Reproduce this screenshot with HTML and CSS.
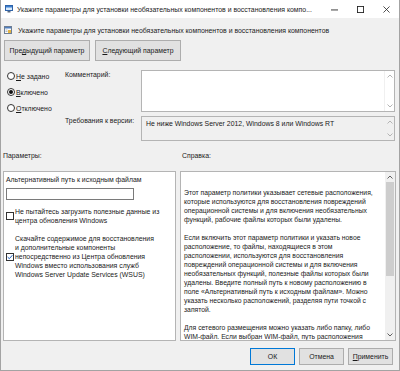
FILE: index.html
```html
<!DOCTYPE html>
<html lang="ru">
<head>
    <meta charset="UTF-8">
    <title>Укажите параметры для установки необязательных компонентов и восстановления компонентов</title>
    <link rel="stylesheet" href="styles.css">
</head>
<body>
    <div class="window">
        <div class="titlebar">
            <svg class="app-icon" viewBox="0 0 8 8">
                <rect x="0.5" y="0.5" width="7" height="5" fill="#d6e8fa" stroke="#2f63a8"/>
                <rect x="1" y="1" width="6" height="1.5" fill="#3b7fd0"/>
                <rect x="2.5" y="6" width="3" height="1.5" fill="#5a6a80"/>
            </svg>
            <div class="title">Укажите параметры для установки необязательных компонентов и восстановления компо...</div>
            <div class="controls">
                <span class="ctl"><svg viewBox="0 0 8 8"><path d="M0 4.5 H8" stroke="#222" stroke-width="1"/></svg></span>
                <span class="ctl"><svg viewBox="0 0 8 8"><rect x="0.5" y="0.5" width="7" height="7" fill="none" stroke="#222"/></svg></span>
                <span class="ctl"><svg viewBox="0 0 8 8"><path d="M0.5 0.5 L7.5 7.5 M7.5 0.5 L0.5 7.5" stroke="#222" stroke-width="0.9"/></svg></span>
            </div>
        </div>

        <div class="policy-head">
            <svg class="policy-icon" viewBox="0 0 8 8">
                <rect x="0.5" y="0.5" width="7" height="7" fill="#fdfdfd" stroke="#6d7d93"/>
                <rect x="1" y="1" width="6" height="1.5" fill="#4f7fc0"/>
                <rect x="4" y="4" width="3" height="3" fill="#e3b341"/>
                <path d="M1.5 4 H3.5 M1.5 5.5 H3.5" stroke="#8a96a8" stroke-width="0.7"/>
            </svg>
            <span>Укажите параметры для установки необязательных компонентов и восстановления компонентов</span>
        </div>

        <div class="nav">
            <button class="btn btn-nav">Пре<u>д</u>ыдущий параметр</button>
            <button class="btn btn-nav"><u>С</u>ледующий параметр</button>
        </div>

        <div class="top">
            <div class="states">
                <label class="radio"><span class="radio-dot"></span><span><u>Н</u>е задано</span></label>
                <label class="radio"><span class="radio-dot checked"></span><span><u>В</u>ключено</span></label>
                <label class="radio"><span class="radio-dot"></span><span><u>О</u>тключено</span></label>
            </div>
            <div class="fields">
                <div class="field-label">Комментарий:</div>
                <div class="box box-comment">
                    <div class="box-text"></div>
                    <div class="vscroll vscroll-off">
                        <svg class="arrow" viewBox="0 0 6 4"><path d="M0.5 3.5 L3 1 L5.5 3.5" fill="none" stroke="#b4b4b4"/></svg>
                        <svg class="arrow" viewBox="0 0 6 4"><path d="M0.5 0.5 L3 3 L5.5 0.5" fill="none" stroke="#b4b4b4"/></svg>
                    </div>
                </div>
                <div class="field-label">Требования к версии:</div>
                <div class="box box-readonly">
                    <div class="box-text">Не ниже Windows Server 2012, Windows 8 или Windows RT</div>
                    <div class="vscroll vscroll-off">
                        <svg class="arrow" viewBox="0 0 6 4"><path d="M0.5 3.5 L3 1 L5.5 3.5" fill="none" stroke="#b4b4b4"/></svg>
                        <svg class="arrow" viewBox="0 0 6 4"><path d="M0.5 0.5 L3 3 L5.5 0.5" fill="none" stroke="#b4b4b4"/></svg>
                    </div>
                </div>
            </div>
        </div>

        <div class="split section-labels">
            <div>Параметры:</div>
            <div class="help-label">Справка:</div>
        </div>

        <div class="split panels">
            <div class="panel options">
                <div>Альтернативный путь к исходным файлам</div>
                <div class="input"></div>
                <label class="check check-first">
                    <span class="check-box"></span>
                    <span>Не пытайтесь загрузить полезные данные из<br>центра обновления Windows</span>
                </label>
                <label class="check check-second">
                    <span class="check-box">
                        <svg viewBox="0 0 6 6"><path d="M0.6 3 L2.3 4.7 L5.4 1.2" fill="none" stroke="#1f5fbf" stroke-width="1"/></svg>
                    </span>
                    <span>Скачайте содержимое для восстановления<br>и дополнительные компоненты<br>непосредственно из Центра обновления<br>Windows вместо использования служб<br>Windows Server Update Services (WSUS)</span>
                </label>
            </div>

            <div class="panel help">
                <div class="help-text">
                    <p>Этот параметр политики указывает сетевые расположения,<br>которые используются для восстановления повреждений<br>операционной системы и для включения необязательных<br>функций, рабочие файлы которых были удалены.</p>
                    <p>Если включить этот параметр политики и указать новое<br>расположение, то файлы, находящиеся в этом<br>расположении, используются для восстановления<br>повреждений операционной системы и для включения<br>необязательных функций, полезные файлы которых были<br>удалены. Введите полный путь к новому расположению в<br>поле «Альтернативный путь к исходным файлам». Можно<br>указать несколько расположений, разделяя пути точкой с<br>запятой.</p>
                    <p>Для сетевого размещения можно указать либо папку, либо<br>WIM-файл. Если выбран WIM-файл, путь расположения</p>
                </div>
                <div class="vscroll">
                    <svg class="arrow" viewBox="0 0 6 4"><path d="M0.5 3.5 L3 1 L5.5 3.5" fill="none" stroke="#606060"/></svg>
                    <div class="thumb"></div>
                    <div class="track"></div>
                    <svg class="arrow" viewBox="0 0 6 4"><path d="M0.5 0.5 L3 3 L5.5 0.5" fill="none" stroke="#606060"/></svg>
                </div>
            </div>
        </div>

        <div class="footer">
            <button class="btn btn-default">ОК</button>
            <button class="btn">Отмена</button>
            <button class="btn"><u>П</u>рименить</button>
        </div>
    </div>
</body>
</html>
```

FILE: styles.css
```css
* {
    margin: 0;
    padding: 0;
    box-sizing: border-box;
}

body {
    width: 400px;
    height: 371px;
    overflow: hidden;
    font-family: 'Liberation Sans', Arial, sans-serif;
    font-size: 6.9px;
    line-height: 9px;
    color: #1a1a1a;
    background: #f0f0f0;
}

.window {
    height: 371px;
    display: flex;
    flex-direction: column;
    background: #f0f0f0;
    border: 1px solid #a3a3a3;
    border-top: none;
}

/* title bar */
.titlebar {
    height: 18px;
    flex: none;
    display: flex;
    align-items: center;
    background: #fff;
    padding-left: 4px;
}

.app-icon {
    width: 8px;
    height: 8px;
    margin-right: 4px;
    flex: none;
}

.title {
    flex: 1;
    white-space: nowrap;
    overflow: hidden;
}

.controls {
    display: flex;
    align-self: stretch;
}

.ctl {
    width: 26px;
    display: flex;
    align-items: center;
    justify-content: center;
}

.ctl svg {
    width: 7px;
    height: 7px;
}

/* policy name */
.policy-head {
    margin-top: 6px;
    height: 12px;
    display: flex;
    align-items: center;
    gap: 6px;
    padding-left: 3px;
    white-space: nowrap;
}

.policy-icon {
    width: 8px;
    height: 8px;
    flex: none;
}

/* buttons */
.btn {
    font: inherit;
    color: #1a1a1a;
    background: #e1e1e1;
    border: 1px solid #adadad;
    height: 17px;
    width: 45px;
    white-space: nowrap;
}

.btn u {
    text-decoration-thickness: 0.5px;
}

.btn-default {
    border-color: #0078d7;
}

.nav {
    margin-top: 4px;
    display: flex;
    gap: 5px;
    padding-left: 3px;
}

.btn-nav {
    width: 86px;
    height: 21px;
}

/* state + comment */
.top {
    margin-top: 7px;
    display: flex;
}

.states {
    width: 64px;
    flex: none;
}

.radio {
    height: 16px;
    display: flex;
    align-items: center;
    gap: 1px;
    padding-left: 6px;
}

.radio-dot {
    width: 8px;
    height: 8px;
    border: 1px solid #333;
    border-radius: 50%;
    background: #fff;
    display: flex;
    align-items: center;
    justify-content: center;
}

.radio-dot.checked::after {
    content: '';
    width: 4px;
    height: 4px;
    border-radius: 50%;
    background: #111;
}

.fields {
    padding-top: 2px;
    display: grid;
    grid-template-columns: 76px 254px;
    row-gap: 4px;
}

.box {
    display: flex;
    border: 1px solid #b4b4b4;
    background: #fff;
}

.box-comment {
    height: 42px;
}

.box-readonly {
    height: 25px;
    background: #f0f0f0;
}

.box-text {
    flex: 1;
    padding: 2px 4px;
    white-space: nowrap;
}

/* scrollbars */
.vscroll {
    width: 10px;
    display: flex;
    flex-direction: column;
    align-items: center;
    justify-content: space-between;
    padding: 3px 0;
    background: #f0f0f0;
}

.vscroll-off {
    background: #fff;
    border-left: 1px solid #f0f0f0;
}

.box-readonly .vscroll-off {
    background: #f0f0f0;
}

.arrow {
    width: 6px;
    height: 4px;
    flex: none;
}

.thumb {
    width: 8px;
    height: 94px;
    margin-top: 3px;
    background: #cdcdcd;
}

.track {
    flex: 1;
}

/* lower part */
.split {
    display: grid;
    grid-template-columns: 173px 216px;
    column-gap: 4px;
    padding-left: 2px;
}

.section-labels {
    margin-top: 9px;
    height: 10px;
    align-items: center;
}

.help-label {
    padding-left: 2px;
}

.panels {
    margin-top: 11px;
    height: 170px;
}

.panel {
    border: 1px solid #b4b4b4;
    background: #fff;
    overflow: hidden;
}

.options {
    padding: 3px 2px;
    white-space: nowrap;
}

.input {
    margin-top: 4px;
    width: 128px;
    height: 12px;
    border: 1px solid #7a7a7a;
    background: #fff;
}

.check {
    display: flex;
    align-items: center;
    gap: 1px;
}

.check-first {
    margin-top: 7px;
}

.check-second {
    margin-top: 9px;
}

.check-box {
    width: 8px;
    height: 8px;
    flex: none;
    border: 1px solid #333;
    background: #fff;
    display: flex;
}

.check-box svg {
    width: 100%;
    height: 100%;
}

.help {
    display: flex;
}

.help-text {
    flex: 1;
    padding: 16px 0 0 3px;
    font-size: 6.8px;
    white-space: nowrap;
    overflow: hidden;
}

.help-text p + p {
    margin-top: 9px;
}

.footer {
    margin-top: 7px;
    display: flex;
    justify-content: flex-end;
    gap: 4px;
    padding-right: 6px;
}
```
